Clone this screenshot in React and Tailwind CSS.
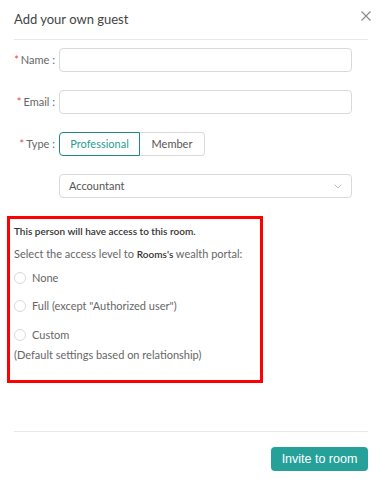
import React, { useState } from 'react';

const font = { fontFamily: 'Lato, "Open Sans", sans-serif' };

function Label({ children }) {
  return (
    <div className="w-[45px] shrink-0 text-right text-[11px] text-[#666] whitespace-nowrap pr-[2px]">
      <span className="text-[#e5484d] mr-[2px]">*</span>
      {children} :
    </div>
  );
}

function Radio({ label }) {
  return (
    <label className="flex items-center gap-[6px] text-[11px] text-[#666]">
      <span className="w-[12px] h-[12px] rounded-full border border-[#d9d9d9] bg-white" />
      {label}
    </label>
  );
}

export default function App() {
  const [type, setType] = useState('professional');

  return (
    <div className="w-[382px] h-[484px] bg-white relative" style={font}>
      {/* header */}
      <div className="flex items-center justify-between h-[40px] mx-[14px] border-b border-[#e8e8e8]">
        <h2 className="text-[13px] text-[#444] pt-[1px]">Add your own guest</h2>
        <svg width="10" height="10" viewBox="0 0 10 10" className="mb-[8px] mr-[-3px]">
          <path d="M0.5 0.5L9.5 9.5M9.5 0.5L0.5 9.5" stroke="#888" strokeWidth="1.1" />
        </svg>
      </div>

      {/* form */}
      <div className="pl-[12px] pr-[30px] pt-[8px] flex flex-col">
        <div className="flex items-center gap-[2px]">
          <Label>Name</Label>
          <input className="flex-1 h-[24px] rounded-[4px] border border-[#d9d9d9] outline-none" />
        </div>
        <div className="flex items-center gap-[2px] mt-[18px]">
          <Label>Email</Label>
          <input className="flex-1 h-[24px] rounded-[4px] border border-[#d9d9d9] outline-none" />
        </div>
        <div className="flex items-center gap-[2px] mt-[18px]">
          <Label>Type</Label>
          <div className="flex h-[24px] text-[11px]">
            <button
              onClick={() => setType('professional')}
              className={`w-[81px] rounded-l-[4px] border ${
                type === 'professional' ? 'border-[#1f8a7e] text-[#2a9d8f]' : 'border-[#d9d9d9] text-[#555]'
              }`}
            >
              Professional
            </button>
            <button
              onClick={() => setType('member')}
              className={`w-[65px] rounded-r-[4px] border border-l-0 ${
                type === 'member' ? 'border-[#1f8a7e] text-[#2a9d8f]' : 'border-[#d9d9d9] text-[#555]'
              }`}
            >
              Member
            </button>
          </div>
        </div>
        <div className="flex items-center mt-[18px] ml-[47px]">
          <div className="flex-1 h-[24px] rounded-[4px] border border-[#d9d9d9] flex items-center justify-between px-[9px] text-[11px] text-[#555]">
            <span>Accountant</span>
            <svg width="8" height="5" viewBox="0 0 8 5">
              <path d="M0.5 0.5L4 4L7.5 0.5" fill="none" stroke="#bbb" strokeWidth="1" />
            </svg>
          </div>
        </div>
      </div>

      {/* access box */}
      <div className="mt-[18px] ml-[7px] w-[256px] h-[167px] border-[3px] border-[#ff0000] px-[4px] pt-[5px]">
        <p className="text-[10px] font-semibold text-[#333]">This person will have access to this room.</p>
        <p className="text-[11px] text-[#666] mt-[7px]">
          Select the access level to <span className="text-[10px] font-semibold text-[#333]">Rooms's</span> wealth portal:
        </p>
        <div className="flex flex-col gap-[12px] mt-[7px]">
          <Radio label="None" />
          <Radio label='Full (except "Authorized user")' />
          <Radio label="Custom" />
        </div>
        <p className="text-[11px] text-[#666] mt-[4px]">(Default settings based on relationship)</p>
      </div>

      {/* footer */}
      <div className="absolute left-[14px] right-[14px] top-[431px] border-t border-[#e8e8e8] flex justify-end pt-[15px]">
        <button
          className="h-[24px] w-[97px] rounded-[4px] bg-[#26a199] text-white text-[12.5px] font-medium"
          style={{ fontFamily: '"Liberation Sans", Arial, sans-serif' }}
        >
          Invite to room
        </button>
      </div>
    </div>
  );
}
